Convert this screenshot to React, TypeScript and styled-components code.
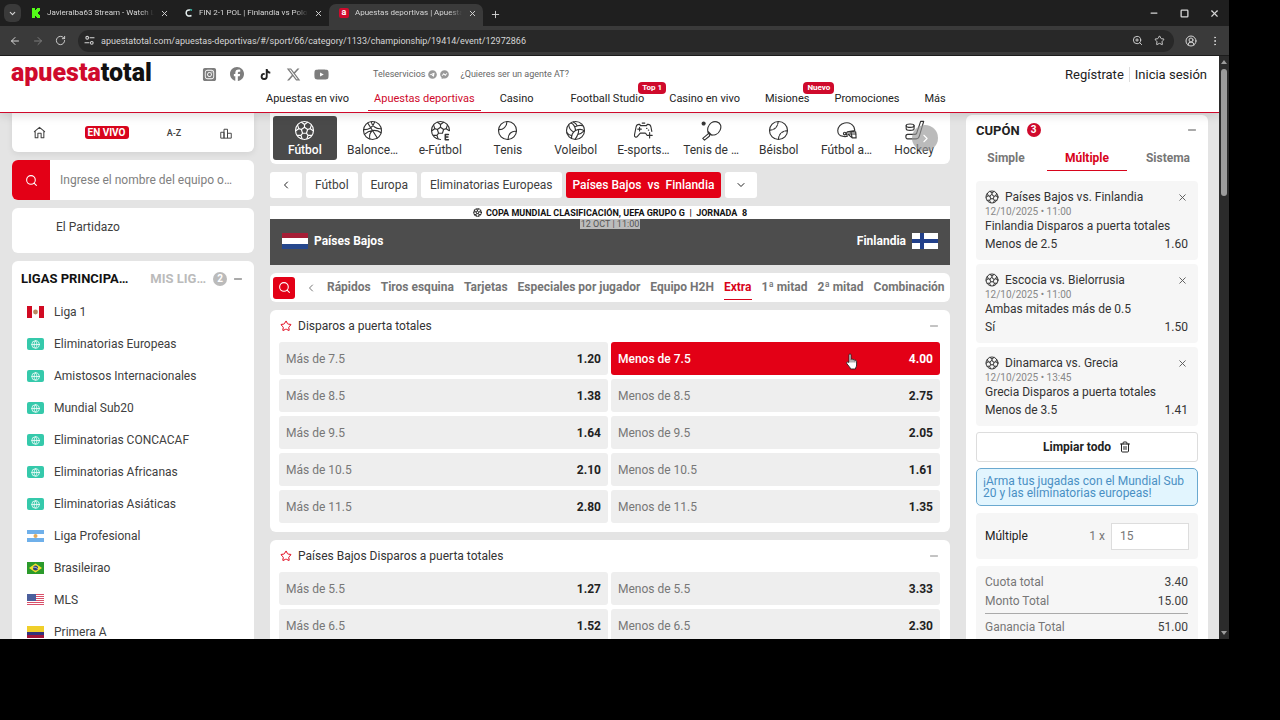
import React from 'react';
import styled, { createGlobalStyle, css } from 'styled-components';
import {
  ArrowLeft, ArrowRight, ChevronDown, ChevronLeft, ChevronRight, CircleUserRound, EllipsisVertical, Minus, Plus,
  RotateCw, Search, Square, Star, Trash2, X, ZoomIn, Globe,
} from 'lucide-react';
import { FaFacebook, FaSquareInstagram, FaTiktok, FaXTwitter, FaYoutube, FaTelegram, FaFacebookMessenger } from 'react-icons/fa6';

const RED = '#e30016';
const BRAND = '#cf0a2c';
const FONT = 'Roboto, "Liberation Sans", sans-serif';

const Global = createGlobalStyle`
  *, *::before, *::after { box-sizing: border-box; }
  body { margin: 0; background: #000; font-family: ${FONT}; font-size: 12px; color: #404040; }
  button, input { font: inherit; color: inherit; margin: 0; padding: 0; border: 0; background: none; }
  a { color: inherit; text-decoration: none; }
  ul { list-style: none; margin: 0; padding: 0; }
  h2, h3, p, dl, dd { margin: 0; font: inherit; }
  svg { display: block; flex: none; }
`;

const Screen = styled.div`
  height: 100vh;
  padding: 0 51px 81px 0;
  background: #000;
`;
const BrowserWindow = styled.div`
  height: 100%;
  display: flex;
  flex-direction: column;
  overflow: hidden;
`;

/* ---------- browser frame ---------- */
const TabStrip = styled.div`
  display: flex;
  align-items: flex-end;
  height: 26px;
  flex: none;
  background: #1f1f1f;
  color: #d6d6d6;
`;
const ChromeButton = styled.button<{ $w: number; $dim?: boolean }>`
  width: ${(p) => p.$w}px;
  height: 24px;
  display: flex;
  align-items: center;
  justify-content: center;
  color: ${(p) => (p.$dim ? '#7c7c7c' : '#d6d6d6')};
`;
const TabSearch = styled.button`
  width: 17px;
  height: 18px;
  margin: 0 0 4px 4px;
  border-radius: 6px;
  background: #3a3a3a;
  display: flex;
  align-items: center;
  justify-content: center;
`;
const Tab = styled.div<{ $active?: boolean }>`
  width: 154px;
  height: 22px;
  display: flex;
  align-items: center;
  gap: 6px;
  padding: 0 6px 4px 10px;
  border-radius: 7px 7px 0 0;
  background: ${(p) => (p.$active ? '#3a3a3a' : 'transparent')};
`;
const TabTitle = styled.span`
  flex: 1;
  min-width: 0;
  font-size: 8px;
  line-height: 14px;
  white-space: nowrap;
  mask-image: linear-gradient(90deg, #000 88%, transparent);
`;
const WindowControls = styled.div`
  margin-left: auto;
  display: flex;
  height: 26px;
  align-items: center;
`;
const Toolbar = styled.div`
  display: flex;
  align-items: center;
  height: 30px;
  flex: none;
  padding: 0 7px 0 3px;
  background: #3a3a3a;
  border-bottom: 1px solid #1c1c1c;
  color: #d6d6d6;
`;
const AddressBar = styled.label`
  flex: 1;
  height: 22px;
  margin: 0 0 0 6px;
  padding: 0 9px 0 4px;
  border-radius: 11px;
  background: #282828;
  display: flex;
  align-items: center;
  gap: 5px;
`;
const SiteInfo = styled.span`
  width: 14px;
  height: 14px;
  display: flex;
  align-items: center;
  justify-content: center;
`;
const AddressInput = styled.input`
  flex: 1;
  min-width: 0;
  font-size: 9px;
  color: #d6d6d6;
  outline: none;
`;
const BarIcons = styled.span`
  display: flex;
  gap: 11px;
`;
const Viewport = styled.div`
  flex: 1;
  min-height: 0;
  display: flex;
`;
const Page = styled.div`
  flex: 1;
  min-width: 0;
  overflow: hidden;
  background: #e4e4e4;
`;
const ScrollTrack = styled.div`
  width: 10px;
  flex: none;
  display: flex;
  flex-direction: column;
  align-items: center;
  padding: 4px 0;
  background: #2b2b2b;
`;
const ScrollThumb = styled.div`
  width: 6px;
  height: 22%;
  margin: 5px 0 auto;
  border-radius: 3px;
  background: #9c9c9c;
`;

/* ---------- site header ---------- */
const Header = styled.header`
  position: relative;
  z-index: 2;
  display: flex;
  height: 57px;
  padding: 0 12px 0 11px;
  background: #fff;
  border-bottom: 1px solid ${BRAND};
  box-shadow: 0 2px 10px rgba(0, 0, 0, 0.14);
`;
const Logo = styled.a`
  width: 184px;
  height: 34px;
  font-weight: 900;
  font-size: 25px;
  line-height: 34px;
  color: #111;
  span { color: ${BRAND}; }
`;
const HeaderMain = styled.div`
  flex: 1;
`;
const TopRow = styled.div`
  display: flex;
  align-items: center;
  height: 36px;
  color: #666;
  font-size: 9px;
`;
const Socials = styled.div`
  display: grid;
  grid-template-columns: repeat(5, 28px);
  place-items: center;
  width: 178px;
  color: #7d7d7d;
`;
const Tele = styled.a`
  display: flex;
  align-items: center;
  gap: 3px;
  margin-right: 11px;
  svg { color: #999; }
`;
const Nav = styled.nav`
  display: flex;
  gap: 13px;
  padding: 1px 0 0 65px;
`;
const NavLink = styled.a<{ $active?: boolean; $wide?: boolean }>`
  position: relative;
  margin-right: ${(p) => (p.$wide ? '12px' : '0')};
  padding: 0 6px 5px;
  line-height: 12px;
  font-size: 11px;
  white-space: nowrap;
  color: ${(p) => (p.$active ? BRAND : '#222')};
  border-bottom: 1px solid ${(p) => (p.$active ? BRAND : 'transparent')};
`;
const NavBadge = styled.span`
  position: absolute;
  left: calc(100% - 12px);
  top: -11px;
  padding: 0 4px;
  border-radius: 4px;
  background: ${BRAND};
  color: #fff;
  font-size: 8px;
  font-weight: 700;
  line-height: 12px;
`;
const Account = styled.div`
  display: flex;
  align-items: center;
  height: 36px;
  font-size: 13px;
  color: #222;
  a + a { margin-left: 5px; padding-left: 5px; border-left: 1px solid #ddd; }
`;

/* ---------- page columns ---------- */
const Columns = styled.div`
  display: grid;
  grid-template-columns: 242px minmax(0, 1fr) 242px;
  gap: 16px;
  align-items: start;
  padding: 0 11px 0 12px;
`;
const Column = styled.div`
  display: flex;
  flex-direction: column;
  gap: 8px;
`;
const Card = styled.section<{ $flatTop?: boolean }>`
  background: #fff;
  border-radius: ${(p) => (p.$flatTop ? '0 0 6px 6px' : '6px')};
`;

/* ---------- left column ---------- */
const ShortcutBar = styled(Card)`
  display: grid;
  grid-template-columns: 54px 81px 54px 50px;
  height: 39px;
  box-shadow: 0 2px 6px rgba(0, 0, 0, 0.08);
`;
const Shortcut = styled.button`
  display: flex;
  align-items: center;
  justify-content: center;
  font-size: 9px;
  font-weight: 500;
`;
const LiveTag = styled.span`
  padding: 0 3px;
  border-radius: 3px;
  background: #d8041c;
  color: #fff;
  font-size: 10px;
  font-weight: 700;
  line-height: 13px;
`;
const TeamSearch = styled.label`
  display: flex;
  height: 40px;
  border-radius: 6px;
  overflow: hidden;
  background: #fff;
`;
const TeamSearchIcon = styled.span`
  width: 38px;
  display: flex;
  align-items: center;
  justify-content: center;
  background: ${RED};
  color: #fff;
`;
const TeamSearchInput = styled.input`
  flex: 1;
  min-width: 0;
  padding: 0 10px;
  font-size: 12px;
  &::placeholder { color: #808080; opacity: 1; }
`;
const FeaturedCard = styled(Card)`
  height: 45px;
  padding: 12px 44px;
  line-height: 15px;
`;
const LeagueHead = styled.div`
  display: flex;
  align-items: center;
  height: 35px;
  padding: 0 10px 0 9px;
  font-size: 13px;
  font-weight: 700;
`;
const LeagueTab = styled.button<{ $active?: boolean }>`
  font-weight: 700;
  color: ${(p) => (p.$active ? '#111' : '#bbb')};
  margin-right: ${(p) => (p.$active ? '22px' : '7px')};
`;
const CountBadge = styled.span<{ $red?: boolean }>`
  width: 14px;
  height: 14px;
  border-radius: 7px;
  background: ${(p) => (p.$red ? BRAND : '#bbb')};
  color: #fff;
  font-size: 10px;
  font-weight: 700;
  line-height: 14px;
  text-align: center;
`;
const PushRight = styled.button`
  margin-left: auto;
  color: #555;
`;
const LeagueItem = styled.li`
  a {
    display: flex;
    align-items: center;
    gap: 10px;
    height: 32px;
    padding-left: 15px;
  }
`;
const WorldFlag = styled.span`
  width: 17px;
  height: 12px;
  border-radius: 2px;
  background: #35c9ab;
  color: #fff;
  display: flex;
  align-items: center;
  justify-content: center;
`;

/* ---------- middle column ---------- */
const SportStrip = styled(Card)`
  position: relative;
  display: flex;
  gap: 4px;
  height: 51px;
  padding: 3px 4px 4px 3px;
  overflow: hidden;
`;
const Sport = styled.button<{ $active?: boolean }>`
  flex: 1 1 0;
  min-width: 0;
  display: flex;
  flex-direction: column;
  align-items: center;
  justify-content: center;
  gap: 2px;
  border-radius: 3px;
  line-height: 14px;
  white-space: nowrap;
  color: #333;
  ${(p) => p.$active && css`
    background: #4a4a4a;
    color: #fff;
    font-weight: 500;
  `}
`;
const StripNext = styled.button`
  position: absolute;
  right: 12px;
  top: 12px;
  width: 26px;
  height: 26px;
  border-radius: 13px;
  background: rgba(150, 150, 150, 0.65);
  color: #fff;
  display: flex;
  align-items: center;
  justify-content: center;
`;
const Crumbs = styled.nav`
  display: flex;
  gap: 4px;
`;
const Crumb = styled.a<{ $active?: boolean }>`
  display: flex;
  align-items: center;
  height: 26px;
  padding: 0 ${(p) => (p.$active ? 7 : 9)}px;
  border-radius: 3px;
  white-space: pre;
  background: ${(p) => (p.$active ? RED : '#fff')};
  color: ${(p) => (p.$active ? '#fff' : '#404040')};
  font-weight: ${(p) => (p.$active ? 500 : 400)};
`;
const CrumbButton = styled.button`
  width: 32px;
  height: 26px;
  border-radius: 3px;
  background: #fff;
  color: #222;
  display: flex;
  align-items: center;
  justify-content: center;
`;
const MatchBanner = styled.section`
  background: #4d4d4d;
  color: #fff;
`;
const Competition = styled.p`
  display: flex;
  align-items: center;
  justify-content: center;
  gap: 4px;
  height: 13px;
  background: #fff;
  color: #111;
  font-size: 9px;
  font-weight: 700;
  white-space: pre;
`;
const Kickoff = styled.time`
  display: block;
  width: 60px;
  height: 10px;
  margin: 0 auto;
  background: #bcbcbc;
  color: #555;
  font-size: 9px;
  line-height: 10px;
  text-align: center;
`;
const Teams = styled.div`
  display: flex;
  justify-content: space-between;
  height: 36px;
  padding: 4px 12px 0;
  font-weight: 700;
`;
const Team = styled.div`
  display: flex;
  align-items: center;
  gap: 6px;
  height: 16px;
`;
const MarketTabs = styled(Card)`
  display: flex;
  align-items: center;
  gap: 10px;
  height: 29px;
  padding-left: 3px;
  overflow: hidden;
`;
const MarketSearch = styled.button`
  width: 22px;
  height: 22px;
  flex: none;
  border-radius: 3px;
  background: ${RED};
  color: #fff;
  display: flex;
  align-items: center;
  justify-content: center;
`;
const MarketBack = styled.button`
  width: 12px;
  flex: none;
  color: #777;
`;
const MarketTab = styled.button<{ $active?: boolean }>`
  height: 24px;
  font-size: 12px;
  font-weight: 700;
  white-space: nowrap;
  color: ${(p) => (p.$active ? '#d8041c' : '#757575')};
  border-bottom: 1px solid ${(p) => (p.$active ? '#d8041c' : 'transparent')};
`;
const Market = styled(Card)`
  padding: 0 10px 9px 9px;
`;
const MarketHead = styled.div`
  display: flex;
  align-items: center;
  gap: 6px;
  height: 32px;
  padding: 0 0 0 1px;
  color: #333;
  button { color: #888; }
`;
const OddsGrid = styled.div`
  display: grid;
  grid-template-columns: 1fr 1fr;
  gap: 4px 3px;
`;
const Odd = styled.button<{ $picked?: boolean }>`
  position: relative;
  display: flex;
  align-items: center;
  justify-content: space-between;
  height: 33px;
  padding: 0 7px;
  border-radius: 3px;
  background: ${(p) => (p.$picked ? RED : '#eee')};
  color: ${(p) => (p.$picked ? '#fff' : '#777')};
  font-weight: ${(p) => (p.$picked ? 500 : 400)};
  b { font-weight: 700; color: ${(p) => (p.$picked ? '#fff' : '#222')}; }
`;
const Pointer = styled.svg`
  position: absolute;
  right: 82px;
  top: 11px;
`;

/* ---------- coupon ---------- */
const Coupon = styled(Card)`
  display: flex;
  flex-direction: column;
  margin-top: 2px;
  padding: 0 10px 10px;
`;
const CouponHead = styled.div`
  display: flex;
  align-items: center;
  gap: 7px;
  height: 30px;
  h2 { font-size: 13px; font-weight: 700; color: #222; }
`;
const CouponTabs = styled.div`
  display: flex;
  justify-content: space-between;
  height: 26px;
  margin-bottom: 10px;
`;
const CouponTab = styled.button<{ $active?: boolean }>`
  min-width: 60px;
  height: 26px;
  font-weight: 700;
  color: ${(p) => (p.$active ? '#d8041c' : '#777')};
  ${(p) => p.$active && css`
    width: 80px;
    border-bottom: 1px solid #d8041c;
  `}
`;
const Selections = styled.ul`
  display: flex;
  flex-direction: column;
  gap: 4px;
`;
const Selection = styled.li`
  height: 79px;
  padding: 8px 10px 0 9px;
  border-radius: 4px;
  background: #f6f6f6;
  color: #333;
`;
const PickLine = styled.div`
  display: flex;
  align-items: center;
  height: 16px;
  gap: 6px;
`;
const PickDate = styled.p`
  font-size: 10px;
  line-height: 14px;
  color: #888;
`;
const PickText = styled.p`
  line-height: 15px;
`;
const Spread = styled.div`
  display: flex;
  align-items: center;
  justify-content: space-between;
  height: 19px;
`;
const ClearButton = styled.button`
  display: flex;
  align-items: center;
  justify-content: center;
  gap: 8px;
  height: 30px;
  margin: 6px 0;
  border: 1px solid #ddd;
  border-radius: 3px;
  font-weight: 700;
  color: #222;
`;
const Notice = styled.p`
  padding: 6px;
  border: 1px solid #6aa9d0;
  border-radius: 5px;
  background: #e2f5fe;
  color: #4a90c4;
  font-size: 12px;
  line-height: 12px;
`;
const StakeBox = styled.label`
  display: flex;
  align-items: center;
  height: 46px;
  margin: 7px 0;
  padding: 0 9px;
  border-radius: 4px;
  background: #f6f6f6;
  color: #222;
`;
const StakeTimes = styled.span`
  margin: 0 6px 0 auto;
  color: #777;
`;
const StakeInput = styled.input`
  width: 78px;
  height: 27px;
  padding: 0 8px;
  border: 1px solid #ddd;
  background: #fff;
  color: #777;
`;
const Totals = styled.dl`
  padding: 6px 10px 10px 9px;
  border-radius: 4px 4px 0 0;
  background: #f6f6f6;
  dt { color: #777; }
  hr { margin: 3px 0; border: 0; border-top: 1px solid #aaa; }
`;

/* ---------- icons ---------- */
type IconProps = { size?: number; sw?: number };
const Line = ({ size = 21, sw = 1.3, children }: React.PropsWithChildren<IconProps>) => (
  <svg width={size} height={size} viewBox="0 0 24 24" fill="none" stroke="currentColor" strokeWidth={sw} strokeLinecap="round" strokeLinejoin="round" aria-hidden="true">{children}</svg>
);
const ballPatches = 'M12 8.2l3.6 2.6-1.4 4.3H9.8l-1.4-4.3zM12 8.2V5.2M15.6 10.8l2.9-.9M14.2 15.1l1.8 2.4M9.8 15.1L8 17.5M8.4 10.8l-2.9-.9M8.6 2.6L12 5.2l3.4-2.6M19.9 5.8l-1.4 4.1 3.5 2.4M20.3 17.6l-4.3-.1-1.2 4.1M9.2 21.6L8 17.5l-4.3.1M2 12.3l3.5-2.4-1.4-4.1';
const Football = (p: IconProps) => <Line {...p}><circle cx="12" cy="12" r="10.3" /><path d={ballPatches} /></Line>;
const Basketball = () => <Line><circle cx="12" cy="12" r="10.3" /><path d="M6.500 3.500L17.500 20.500M1.800 11c5.500.5 11-2.500 12.700-8.800M2.800 16.500C8 11.500 15.500 10 21.800 14.500M12 12c-3 2.500-4 6-3 9.800M10.500 2c1 5 5.500 8.500 11.500 8" /></Line>;
const EFootball = () => <Line><path d="M12 22.300A10.300 10.300 0 1 1 22.300 12" /><path d="M12 8.200l3.600 2.600-1.400 4.300H9.800l-1.400-4.300zM12 8.200V5.200M15.600 10.800l2.900-.9M9.800 15.100L8 17.500M8.400 10.800l-2.900-.9M8.600 2.600L12 5.200l3.400-2.600M19.900 5.800l-1.400 4.100 3.500 2.400M9.200 21.600L8 17.500l-4.300.1M2 12.300l3.500-2.400-1.400-4.100" /><path d="M21 16.500h-3.500v6H21M17.500 19.500h3" strokeWidth="1.800" /></Line>;
const Tennis = () => <Line><circle cx="12" cy="12" r="10.300" /><path d="M2 11c5 .3 9.500-3.500 9.300-9.200M22.200 13c-5-1-10 3-9.400 9.200" /></Line>;
const Volley = () => <Line><circle cx="12" cy="12" r="10.300" /><path d="M12 12c-.3-4-2-7-5-8.500M12 12c3.700-1.700 7.500-1.700 10 .5M12 12c-3.300 2.400-4.800 5.800-4.500 9M11 8c3.500-2 7-2 9.500-1.500M9.800 13.600C6 12 4.500 9 4.300 5.500M15.500 10.800c.5 4.200-1.500 7.800-4 11.300M9.500 2.200c2 .8 3.500 2 4.500 4.500M2 14.500c1.500 2 3.500 3.200 6 3.500M14.500 16.500c3-.5 5.500-2 7.300-4" /></Line>;
const Gamepad = () => <Line><path d="M21.500 13L20.500 8c-.4-2-1.400-3-3.200-3h-1l-.8 1.400H8.500L7.700 5h-1C4.900 5 3.900 6 3.500 8L1.700 17c-.5 2.500 2 3.400 3.400 1.700L8.300 15H14l1.500 1.500M5.500 10.500h4M7.500 8.500v4M19 14.500v6M16 17.500h6M10.500 3.500h3M15.500 9.500h.5M17.500 11.500h.5" /></Line>;
const PingPong = () => <Line><circle cx="3" cy="4" r="1.700" fill="currentColor" /><path d="M8.500 15.500C6.500 11 8 5.500 12 3s9-.8 10.300 2.700-1 9.300-5.300 10.800-6.500.5-8.500-1zM8.500 15.500L2 21l2 2 5.500-4.500.8-2.200M8 13l4.500 4.500" /></Line>;
const Baseball = () => <Line><circle cx="12" cy="12" r="10.300" /><path d="M2.500 11.500c4.500 0 8.500-3.500 9-9M21.800 12.500c-5-.5-9.500 3.500-9.800 9" strokeDasharray="2.500 1.500" /></Line>;
const Helmet = () => <Line><path d="M13 13.500l-1.500 2 1.500 3c-2 .8-4 .5-5.500 0C4 18.500 2 15.500 2 12A10 10 0 0 1 20.500 8l1 4zM13 13.500h9.500l.5 7h-4.500l-5-4.500H23M17 13.500l1.500 7" /><circle cx="10" cy="15.500" r="1.500" /></Line>;
const Hockey = () => <Line><path d="M19 1.500h3.500l-5 17c-.5 2-1.500 3-3.500 3H4c-2.500 0-2.500-5 0-5h8.500c1 0 1.500-.5 2-1.500z" /><ellipse cx="7" cy="6.500" rx="4.500" ry="1.900" /><path d="M2.500 6.500v3.500c0 1 2 1.900 4.500 1.900s4.500-.9 4.500-1.900V6.500" /></Line>;
const House = () => <Line size={13} sw={1.900}><path d="M2.500 10.500L12 2.500l9.500 8M4 9.500V21.500h5v-8h6v8h5V9.500" /></Line>;
const Podium = () => <Line size={12} sw={1.900}><path d="M1.500 21.500V10.500h6.500v11zM8 21.500V4.500h7v17zM15 21.500v-9h7.500v9z" /></Line>;
const Tune = () => <Line size={11} sw={2.200}><circle cx="7" cy="6" r="3" /><path d="M13 6h9M2 17h9" /><circle cx="17" cy="17" r="3" /></Line>;

const Kick = () => <svg width="10" height="10" viewBox="0 0 10 10" aria-hidden="true"><path fill="#53fc18" d="M1 0h3v2h1V1h1V0h3v3H8v1H7v2h1v1h1v3H6V9H5V8H4v2H1z" /></svg>;
const Swirl = () => <svg width="8" height="10" viewBox="0 0 8 10" fill="none" stroke="#e6f0f0" strokeWidth="1.500" aria-hidden="true"><path d="M5 2C2 1.500 1 3.500 1.200 5.500S3.500 8.800 6.500 7.500" /><path d="M5 1.500l2 .8" stroke="#3fb6a8" /></svg>;
const SiteMark = styled.span`
  width: 10px;
  height: 10px;
  border-radius: 2px;
  background: ${BRAND};
  color: #fff;
  font-size: 9px;
  font-weight: 700;
  line-height: 9px;
  text-align: center;
`;

const flags: Record<string, React.ReactNode> = {
  pe: <><path fill="#fff" d="M0 0h17v12H0z" /><path fill="#d10a22" d="M0 0h5v12H0zM12 0h5v12h-5z" /><circle cx="8.500" cy="6" r="2.400" fill="#b98a62" /></>,
  ar: <><path fill="#fff" d="M0 0h17v12H0z" /><path fill="#6fb0ea" d="M0 0h17v4H0zM0 8h17v4H0z" /><circle cx="8.500" cy="6" r="2" fill="#e0a95a" /></>,
  br: <><path fill="#2b9a2b" d="M0 0h17v12H0z" /><path fill="#f5e02c" d="M8.500 1.500L15 6l-6.500 4.500L2 6z" /><circle cx="8.500" cy="6" r="2.500" fill="#2a3f7a" /><path d="M6.300 5.300c1.600-.3 3.200.2 4.400 1.400" stroke="#fff" strokeWidth=".7" fill="none" /></>,
  us: <><path fill="#fff" d="M0 0h17v12H0z" /><path stroke="#d9506a" strokeWidth="1" d="M0 .5h17M0 2.500h17M0 4.500h17M0 6.500h17M0 8.500h17M0 10.500h17" /><path fill="#4b5f9c" d="M0 0h9v7H0z" /></>,
  co: <><path fill="#f0cf2a" d="M0 0h17v6H0z" /><path fill="#33337c" d="M0 6h17v3H0z" /><path fill="#a3163a" d="M0 9h17v3H0z" /></>,
};
const Flag = ({ code }: { code: string }) =>
  code === 'world'
    ? <WorldFlag><Globe size={9} strokeWidth={2} /></WorldFlag>
    : <svg width="17" height="12" viewBox="0 0 17 12" aria-hidden="true">{flags[code]}</svg>;

/* ---------- data ---------- */
const leagues: [string, string][] = [
  ['pe', 'Liga 1'], ['world', 'Eliminatorias Europeas'], ['world', 'Amistosos Internacionales'], ['world', 'Mundial Sub20'],
  ['world', 'Eliminatorias CONCACAF'], ['world', 'Eliminatorias Africanas'], ['world', 'Eliminatorias Asiáticas'],
  ['ar', 'Liga Profesional'], ['br', 'Brasileirao'], ['us', 'MLS'], ['co', 'Primera A'],
];
const navItems: { label: string; active?: boolean; wide?: boolean; badge?: string }[] = [
  { label: 'Apuestas en vivo' }, { label: 'Apuestas deportivas', active: true }, { label: 'Casino', wide: true },
  { label: 'Football Studio', badge: 'Top 1' }, { label: 'Casino en vivo' }, { label: 'Misiones', badge: 'Nuevo' },
  { label: 'Promociones' }, { label: 'Más' },
];
const sports: [string, React.ComponentType][] = [
  ['Fútbol', Football], ['Balonce…', Basketball], ['e-Fútbol', EFootball], ['Tenis', Tennis], ['Voleibol', Volley],
  ['E-sports…', Gamepad], ['Tenis de …', PingPong], ['Béisbol', Baseball], ['Fútbol a…', Helmet], ['Hockey', Hockey],
];
const marketTabs = ['Rápidos', 'Tiros esquina', 'Tarjetas', 'Especiales por jugador', 'Equipo H2H', 'Extra', '1ª mitad', '2ª mitad', 'Combinación'];
const markets: { title: string; rows: [string, string, string][] }[] = [
  { title: 'Disparos a puerta totales', rows: [['7.5', '1.20', '4.00'], ['8.5', '1.38', '2.75'], ['9.5', '1.64', '2.05'], ['10.5', '2.10', '1.61'], ['11.5', '2.80', '1.35']] },
  { title: 'Países Bajos Disparos a puerta totales', rows: [['5.5', '1.27', '3.33'], ['6.5', '1.52', '2.30']] },
];
const picks = [
  { match: 'Países Bajos vs. Finlandia', date: '12/10/2025 • 11:00', market: 'Finlandia Disparos a puerta totales', pick: 'Menos de 2.5', odd: '1.60' },
  { match: 'Escocia vs. Bielorrusia', date: '12/10/2025 • 11:00', market: 'Ambas mitades más de 0.5', pick: 'Sí', odd: '1.50' },
  { match: 'Dinamarca vs. Grecia', date: '12/10/2025 • 13:45', market: 'Grecia Disparos a puerta totales', pick: 'Menos de 3.5', odd: '1.41' },
];

const HandPointer = () => (
  <Pointer width="12" height="17" viewBox="0 0 12 17" aria-hidden="true">
    <path d="M3 9.500V2c0-1.500 2-1.500 2 0v4.500c.3-.8 1.900-.7 2 .4.400-.6 1.800-.4 1.900.6.500-.4 1.700-.2 1.700 1v3.500c0 2-1.200 2.500-1.200 4H4.500c0-1.500-2.500-3.500-3.700-5.500C.3 9.300 1.500 8 3 9.500z" fill="#fff" stroke="#222" strokeWidth=".9" />
    <path d="M5 6.500v3M7 7v2.500M8.900 7.500v2" stroke="#222" strokeWidth=".7" />
  </Pointer>
);

export default function App() {
  return (
    <Screen>
      <Global />
      <BrowserWindow>
        <TabStrip>
          <TabSearch aria-label="Buscar pestañas"><ChevronDown size={9} strokeWidth={3} /></TabSearch>
          <Tab><Kick /><TabTitle>Javieralba63 Stream - Watch Li</TabTitle><X size={9} strokeWidth={2.500} /></Tab>
          <Tab><Swirl /><TabTitle>FIN 2-1 POL | Finlandia vs Polon</TabTitle><X size={9} strokeWidth={2.500} /></Tab>
          <Tab $active><SiteMark>a</SiteMark><TabTitle>Apuestas deportivas | Apuesta</TabTitle><X size={9} strokeWidth={2.500} /></Tab>
          <ChromeButton $w={24} aria-label="Nueva pestaña"><Plus size={11} /></ChromeButton>
          <WindowControls>
            <ChromeButton $w={30} aria-label="Minimizar"><Minus size={10} strokeWidth={3} /></ChromeButton>
            <ChromeButton $w={30} aria-label="Maximizar"><Square size={9} strokeWidth={3.500} /></ChromeButton>
            <ChromeButton $w={30} aria-label="Cerrar"><X size={11} strokeWidth={2.500} /></ChromeButton>
          </WindowControls>
        </TabStrip>
        <Toolbar>
          <ChromeButton $w={23} aria-label="Atrás"><ArrowLeft size={12} /></ChromeButton>
          <ChromeButton $w={23} $dim aria-label="Adelante"><ArrowRight size={12} /></ChromeButton>
          <ChromeButton $w={23} aria-label="Recargar"><RotateCw size={11} /></ChromeButton>
          <AddressBar>
            <SiteInfo><Tune /></SiteInfo>
            <AddressInput aria-label="Dirección" defaultValue="apuestatotal.com/apuestas-deportivas/#/sport/66/category/1133/championship/19414/event/12972866" />
            <BarIcons><ZoomIn size={11} /><Star size={11} /></BarIcons>
          </AddressBar>
          <ChromeButton $w={34} aria-label="Perfil"><CircleUserRound size={12} /></ChromeButton>
          <ChromeButton $w={14} aria-label="Menú"><EllipsisVertical size={12} /></ChromeButton>
        </Toolbar>

        <Viewport>
          <Page>
            <Header>
              <Logo href="#"><span>apuesta</span>total</Logo>
              <HeaderMain>
                <TopRow>
                  <Socials><FaSquareInstagram size={15} /><FaFacebook size={14} /><FaTiktok size={11} color="#222" /><FaXTwitter size={15} /><FaYoutube size={15} /></Socials>
                  <Tele href="#">Teleservicios <FaTelegram size={9} /><FaFacebookMessenger size={9} /></Tele>
                  <a href="#">¿Quieres ser un agente AT?</a>
                </TopRow>
                <Nav>
                  {navItems.map((n) => (
                    <NavLink key={n.label} href="#" $active={n.active} $wide={n.wide}>{n.label}{n.badge && <NavBadge>{n.badge}</NavBadge>}</NavLink>
                  ))}
                </Nav>
              </HeaderMain>
              <Account><a href="#">Regístrate</a><a href="#">Inicia sesión</a></Account>
            </Header>

            <Columns>
              <Column>
                <ShortcutBar $flatTop>
                  <Shortcut aria-label="Inicio"><House /></Shortcut>
                  <Shortcut><LiveTag>EN VIVO</LiveTag></Shortcut>
                  <Shortcut>A-Z</Shortcut>
                  <Shortcut aria-label="Resultados"><Podium /></Shortcut>
                </ShortcutBar>
                <TeamSearch>
                  <TeamSearchIcon><Search size={13} /></TeamSearchIcon>
                  <TeamSearchInput aria-label="Buscar equipo" placeholder="Ingrese el nombre del equipo o…" />
                </TeamSearch>
                <FeaturedCard><a href="#">El Partidazo</a></FeaturedCard>
                <Card>
                  <LeagueHead>
                    <LeagueTab $active>LIGAS PRINCIPA…</LeagueTab>
                    <LeagueTab>MIS LIG…</LeagueTab>
                    <CountBadge>2</CountBadge>
                    <PushRight aria-label="Contraer ligas"><Minus size={12} /></PushRight>
                  </LeagueHead>
                  <ul>
                    {leagues.map(([code, name]) => (
                      <LeagueItem key={name}><a href="#"><Flag code={code} />{name}</a></LeagueItem>
                    ))}
                  </ul>
                </Card>
              </Column>

              <Column>
                <SportStrip $flatTop>
                  {sports.map(([label, Icon], i) => <Sport key={label} $active={i === 0}><Icon />{label}</Sport>)}
                  <StripNext aria-label="Más deportes"><ChevronRight size={13} /></StripNext>
                </SportStrip>
                <Crumbs>
                  <CrumbButton aria-label="Volver"><ChevronLeft size={12} /></CrumbButton>
                  <Crumb href="#">Fútbol</Crumb>
                  <Crumb href="#">Europa</Crumb>
                  <Crumb href="#">Eliminatorias Europeas</Crumb>
                  <Crumb href="#" $active>{'Países Bajos  vs  Finlandia'}</Crumb>
                  <CrumbButton aria-label="Más partidos"><ChevronDown size={12} /></CrumbButton>
                </Crumbs>
                <MatchBanner>
                  <Competition><Football size={9} sw={2} />{'COPA MUNDIAL CLASIFICACIÓN, UEFA GRUPO G  |  JORNADA  8'}</Competition>
                  <Kickoff>12 OCT | 11:00</Kickoff>
                  <Teams>
                    <Team>
                      <svg width="26" height="16" viewBox="0 0 26 16" aria-hidden="true"><path fill="#a51e36" d="M0 0h26v5H0z" /><path fill="#fff" d="M0 5h26v6H0z" /><path fill="#26478c" d="M0 11h26v5H0z" /></svg>
                      Países Bajos
                    </Team>
                    <Team>
                      Finlandia
                      <svg width="26" height="16" viewBox="0 0 26 16" aria-hidden="true"><path fill="#fff" d="M0 0h26v16H0z" /><path fill="#22408a" d="M8 0h4v16H8zM0 6h26v4H0z" /></svg>
                    </Team>
                  </Teams>
                </MatchBanner>
                <MarketTabs>
                  <MarketSearch aria-label="Buscar mercado"><Search size={13} /></MarketSearch>
                  <MarketBack aria-label="Mercados anteriores"><ChevronLeft size={12} /></MarketBack>
                  {marketTabs.map((t) => <MarketTab key={t} $active={t === 'Extra'}>{t}</MarketTab>)}
                </MarketTabs>
                {markets.map((m, mi) => (
                  <Market key={m.title}>
                    <MarketHead>
                      <Star size={12} color={RED} strokeWidth={2} /><h3>{m.title}</h3>
                      <PushRight aria-label="Contraer"><Minus size={12} /></PushRight>
                    </MarketHead>
                    <OddsGrid>
                      {m.rows.map(([line, over, under], ri) => {
                        const picked = mi === 0 && ri === 0;
                        return (
                          <React.Fragment key={line}>
                            <Odd><span>Más de {line}</span><b>{over}</b></Odd>
                            <Odd $picked={picked}><span>Menos de {line}</span><b>{under}</b>{picked && <HandPointer />}</Odd>
                          </React.Fragment>
                        );
                      })}
                    </OddsGrid>
                  </Market>
                ))}
              </Column>

              <Coupon>
                <CouponHead>
                  <h2>CUPÓN</h2><CountBadge $red>3</CountBadge>
                  <PushRight aria-label="Contraer cupón"><Minus size={12} /></PushRight>
                </CouponHead>
                <CouponTabs>
                  <CouponTab>Simple</CouponTab><CouponTab $active>Múltiple</CouponTab><CouponTab>Sistema</CouponTab>
                </CouponTabs>
                <Selections>
                  {picks.map((p) => (
                    <Selection key={p.match}>
                      <PickLine><Football size={14} sw={1.700} /><span>{p.match}</span><PushRight aria-label="Quitar"><X size={11} /></PushRight></PickLine>
                      <PickDate>{p.date}</PickDate>
                      <PickText>{p.market}</PickText>
                      <Spread><span>{p.pick}</span><span>{p.odd}</span></Spread>
                    </Selection>
                  ))}
                </Selections>
                <ClearButton>Limpiar todo <Trash2 size={12} /></ClearButton>
                <Notice>¡Arma tus jugadas con el Mundial Sub 20 y las eliminatorias europeas!</Notice>
                <StakeBox>Múltiple<StakeTimes>1 x</StakeTimes><StakeInput defaultValue="15" /></StakeBox>
                <Totals>
                  <Spread><dt>Cuota total</dt><dd>3.40</dd></Spread>
                  <Spread><dt>Monto Total</dt><dd>15.00</dd></Spread>
                  <hr />
                  <Spread><dt>Ganancia Total</dt><dd>51.00</dd></Spread>
                </Totals>
              </Coupon>
            </Columns>
          </Page>
          <ScrollTrack>
            <svg width="6" height="4" viewBox="0 0 6 4" aria-hidden="true"><path fill="#9c9c9c" d="M3 0l3 4H0z" /></svg>
            <ScrollThumb />
            <svg width="6" height="4" viewBox="0 0 6 4" aria-hidden="true"><path fill="#9c9c9c" d="M3 4l3-4H0z" /></svg>
          </ScrollTrack>
        </Viewport>
      </BrowserWindow>
    </Screen>
  );
}
